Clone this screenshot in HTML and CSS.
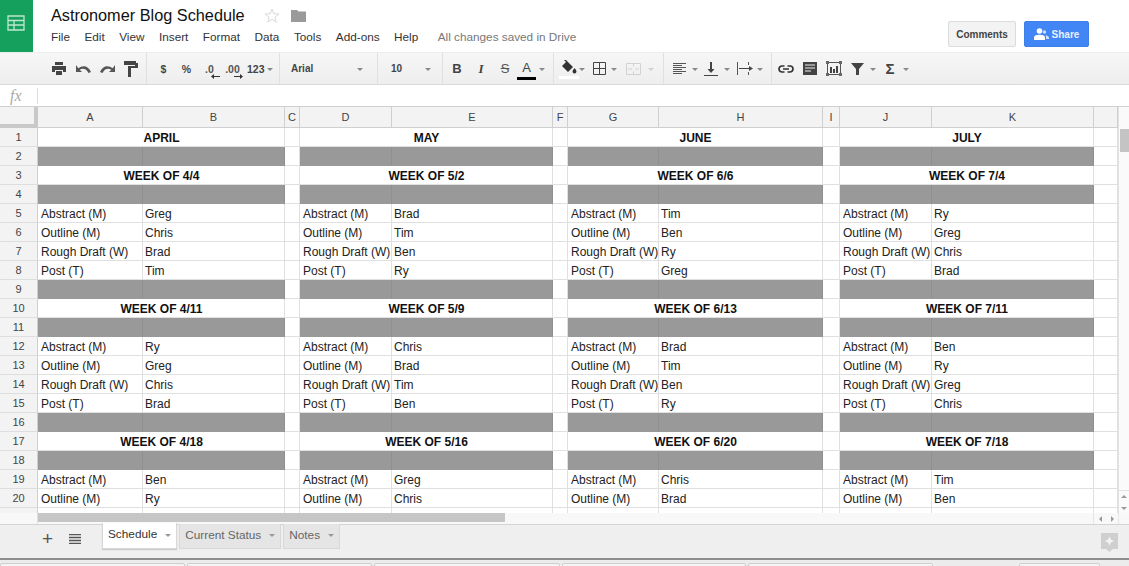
FILE: index.html
```html
<!DOCTYPE html>
<html lang="en">
<head>
    <meta charset="UTF-8">
    <title>Astronomer Blog Schedule</title>
    <link rel="stylesheet" href="styles.css">
</head>
<body>
    <header class="topbar">
        <div class="logo">
            <svg width="18" height="16" viewBox="0 0 18 16"><path d="M1 1h16v14H1zM1 5.500h16M1 10h16M7 5.500V15" fill="none" stroke="#bfe8cf" stroke-width="1.300"/></svg>
        </div>
        <div class="titles">
            <div class="title-row">
                <span class="doc-title">Astronomer Blog Schedule</span>
                <svg class="star" width="16" height="15" viewBox="0 0 16 15"><path d="M8 1l1.800 4.700 5 .3-3.900 3.200 1.300 4.800L8 11.300 3.800 14l1.300-4.800L1.200 6l5-.3z" fill="none" stroke="#d8d8d8"/></svg>
                <svg class="folder" width="15" height="13" viewBox="0 0 15 13"><path d="M0 1h6l1.500 1.500H15V13H0z" fill="#9a9a9a"/></svg>
            </div>
            <nav class="menu">
                <span>File</span><span>Edit</span><span>View</span><span>Insert</span><span>Format</span><span>Data</span><span>Tools</span><span>Add-ons</span><span>Help</span>
                <span class="saved">All changes saved in Drive</span>
            </nav>
        </div>
        <div class="actions">
            <button class="btn-comments">Comments</button>
            <button class="btn-share">
                <svg width="15" height="12" viewBox="0 0 15 12"><circle cx="5.500" cy="3" r="2.800" fill="#fff"/><path d="M0 12V9.500C0 7.500 3 6.800 5.500 6.800S11 7.500 11 9.500V12z" fill="#fff"/><circle cx="10.500" cy="4" r="1.700" fill="#cfe0fb"/><path d="M11.500 7.200c1.500.3 3.500 1 3.500 2.300V11h-3V9c0-.7-.2-1.300-.5-1.800z" fill="#cfe0fb"/></svg>
                Share
            </button>
        </div>
    </header>

    <div class="toolbar">
        <div class="tb-group first">
            <span class="tb-btn"><svg width="14" height="13" viewBox="0 0 14 13"><path d="M3 0h8v3H3zM0 4h14v6h-3V8H3v2H0zM4 9h6v4H4z" fill="#444"/></svg></span>
            <span class="tb-btn"><svg width="15" height="8" viewBox="0 0 15 8"><path d="M0 0v7h6L3.700 4.800C6.500 2.700 10.500 3.300 12.500 8L15 7C12.500 1 7 -.5 2.300 3.300z" fill="#555"/></svg></span>
            <span class="tb-btn"><svg width="15" height="8" viewBox="0 0 15 8"><path d="M15 0v7H9l2.300-2.200C8.500 2.700 4.500 3.300 2.500 8L0 7C2.500 1 8 -.5 12.700 3.300z" fill="#555"/></svg></span>
            <span class="tb-btn"><svg width="14" height="16" viewBox="0 0 14 16"><path d="M0 0h12v2h2v5H7v9H4V5h7V4H0z" fill="#444"/></svg></span>
        </div>
        <div class="tb-group money">
            <span class="tb-btn tb-text">$</span>
            <span class="tb-btn tb-text">%</span>
            <span class="tb-btn tb-dec">.0<svg width="9" height="5" viewBox="0 0 9 5"><path d="M9 2v1H3v2L0 2.500 3 0v2z" fill="#333"/></svg></span>
            <span class="tb-btn tb-dec">.00<svg width="9" height="5" viewBox="0 0 9 5"><path d="M0 2v1h6v2l3-2.500L6 0v2z" fill="#333"/></svg></span>
            <span class="tb-text num-format">123</span><i class="caret"></i>
        </div>
        <div class="tb-group font-name"><span class="tb-label">Arial</span><i class="caret"></i></div>
        <div class="tb-group font-size"><span class="tb-label">10</span><i class="caret"></i></div>
        <div class="tb-group text-style">
            <span class="tb-btn tb-b">B</span>
            <span class="tb-btn tb-i">I</span>
            <span class="tb-btn tb-s">S</span>
            <span class="tb-btn tb-a">A</span><i class="caret"></i>
        </div>
        <div class="tb-group cell-style">
            <span class="tb-btn fill"><svg width="17" height="15" viewBox="0 0 17 15"><path d="M3 0l1-1 8 8-5 5-6-6 4-4zM13.500 8s2 2.300 2 3.500a2 2 0 0 1-4 0c0-1.200 2-3.500 2-3.500z" fill="#333"/></svg></span><i class="caret"></i>
            <span class="tb-btn"><svg width="13" height="13" viewBox="0 0 13 13"><path d="M.5.500h12v12H.5zM6.500.500v12M.5 6.500h12" fill="none" stroke="#444"/></svg></span><i class="caret"></i>
            <span class="tb-btn merge"><svg width="15" height="12" viewBox="0 0 15 12"><path d="M.5.500h14v11H.5zM7.500.500v3M7.500 8.500v3M2 6h4M9 6h4" fill="none" stroke="#d2d2d2"/></svg></span><i class="caret faint"></i>
        </div>
        <div class="tb-group align">
            <span class="tb-btn"><svg width="13" height="11" viewBox="0 0 13 11"><path d="M0 .5h13M0 2.500h9M0 4.500h13M0 6.500h9M0 8.500h13M0 10.500h9" stroke="#555"/></svg></span><i class="caret"></i>
            <span class="tb-btn"><svg width="14" height="14" viewBox="0 0 14 14"><path d="M6 0h2v7h2.500L7 11 3.500 7H6zM0 13h14v1H0z" fill="#444"/></svg></span><i class="caret"></i>
            <span class="tb-btn wrap"><svg width="17" height="13" viewBox="0 0 17 13"><path d="M.5 0v13M11.500 0v3M11.500 10v3" fill="none" stroke="#555"/><path d="M2 6h10V4l4 2.500L12 9V7H2z" fill="#444"/></svg></span><i class="caret"></i>
        </div>
        <div class="tb-group insert">
            <span class="tb-btn"><svg width="16" height="8" viewBox="0 0 16 8"><path d="M6.500 1H4a3 3 0 0 0 0 6h2.500M9.500 1H12a3 3 0 0 1 0 6H9.500M5 4h6" fill="none" stroke="#333" stroke-width="1.700"/></svg></span>
            <span class="tb-btn"><svg width="14" height="13" viewBox="0 0 14 13"><path d="M0 0h14v13H0z" fill="#444"/><path d="M2 3h10M2 6h10M2 9h6" stroke="#eee"/></svg></span>
            <span class="tb-btn"><svg width="16" height="15" viewBox="0 0 16 15"><path d="M1.500 1.500h13v12h-13z" fill="none" stroke="#555"/><path d="M4 6h2v6H4zM7 8h2v4H7zM10 5h2v7h-2z" fill="#444"/><path d="M0 0h3v3H0zM13 0h3v3h-3zM0 12h3v3H0zM13 12h3v3h-3z" fill="#666"/></svg></span>
            <span class="tb-btn tb-narrow"><svg width="13" height="12" viewBox="0 0 13 12"><path d="M0 0h13L8 6v6H5V6z" fill="#444"/></svg></span><i class="caret"></i>
            <span class="tb-btn tb-narrow tb-sum">Σ</span><i class="caret"></i>
        </div>
    </div>

    <div class="formula">
        <span class="fx">fx</span>
        <span class="formula-input"></span>
    </div>

    <div class="sheet-wrap">
        <div class="sheet">
            <table class="grid">
                <colgroup>
                    <col class="c-row"><col class="c-a"><col class="c-b"><col class="c-gap"><col class="c-d"><col class="c-e"><col class="c-gap"><col class="c-g"><col class="c-h"><col class="c-i"><col class="c-d"><col class="c-k"><col class="c-x">
                </colgroup>
                <thead>
                    <tr><th class="corner"></th><th>A</th><th>B</th><th>C</th><th>D</th><th>E</th><th>F</th><th>G</th><th>H</th><th>I</th><th>J</th><th>K</th><th></th></tr>
                </thead>
                <tbody>
                    <tr><th>1</th><td class="head" colspan="2">APRIL</td><td></td><td class="head" colspan="2">MAY</td><td></td><td class="head" colspan="2">JUNE</td><td></td><td class="head" colspan="2">JULY</td><td></td></tr>
                    <tr><th>2</th><td class="bar"></td><td class="bar"></td><td></td><td class="bar"></td><td class="bar"></td><td></td><td class="bar"></td><td class="bar"></td><td></td><td class="bar"></td><td class="bar"></td><td></td></tr>
                    <tr><th>3</th><td class="head" colspan="2">WEEK OF 4/4</td><td></td><td class="head" colspan="2">WEEK OF 5/2</td><td></td><td class="head" colspan="2">WEEK OF 6/6</td><td></td><td class="head" colspan="2">WEEK OF 7/4</td><td></td></tr>
                    <tr><th>4</th><td class="bar"></td><td class="bar"></td><td></td><td class="bar"></td><td class="bar"></td><td></td><td class="bar"></td><td class="bar"></td><td></td><td class="bar"></td><td class="bar"></td><td></td></tr>
                    <tr><th>5</th><td>Abstract (M)</td><td>Greg</td><td></td><td>Abstract (M)</td><td>Brad</td><td></td><td>Abstract (M)</td><td>Tim</td><td></td><td>Abstract (M)</td><td>Ry</td><td></td></tr>
                    <tr><th>6</th><td>Outline (M)</td><td>Chris</td><td></td><td>Outline (M)</td><td>Tim</td><td></td><td>Outline (M)</td><td>Ben</td><td></td><td>Outline (M)</td><td>Greg</td><td></td></tr>
                    <tr><th>7</th><td>Rough Draft (W)</td><td>Brad</td><td></td><td>Rough Draft (W)</td><td>Ben</td><td></td><td>Rough Draft (W)</td><td>Ry</td><td></td><td>Rough Draft (W)</td><td>Chris</td><td></td></tr>
                    <tr><th>8</th><td>Post (T)</td><td>Tim</td><td></td><td>Post (T)</td><td>Ry</td><td></td><td>Post (T)</td><td>Greg</td><td></td><td>Post (T)</td><td>Brad</td><td></td></tr>
                    <tr><th>9</th><td class="bar"></td><td class="bar"></td><td></td><td class="bar"></td><td class="bar"></td><td></td><td class="bar"></td><td class="bar"></td><td></td><td class="bar"></td><td class="bar"></td><td></td></tr>
                    <tr><th>10</th><td class="head" colspan="2">WEEK OF 4/11</td><td></td><td class="head" colspan="2">WEEK OF 5/9</td><td></td><td class="head" colspan="2">WEEK OF 6/13</td><td></td><td class="head" colspan="2">WEEK OF 7/11</td><td></td></tr>
                    <tr><th>11</th><td class="bar"></td><td class="bar"></td><td></td><td class="bar"></td><td class="bar"></td><td></td><td class="bar"></td><td class="bar"></td><td></td><td class="bar"></td><td class="bar"></td><td></td></tr>
                    <tr><th>12</th><td>Abstract (M)</td><td>Ry</td><td></td><td>Abstract (M)</td><td>Chris</td><td></td><td>Abstract (M)</td><td>Brad</td><td></td><td>Abstract (M)</td><td>Ben</td><td></td></tr>
                    <tr><th>13</th><td>Outline (M)</td><td>Greg</td><td></td><td>Outline (M)</td><td>Brad</td><td></td><td>Outline (M)</td><td>Tim</td><td></td><td>Outline (M)</td><td>Ry</td><td></td></tr>
                    <tr><th>14</th><td>Rough Draft (W)</td><td>Chris</td><td></td><td>Rough Draft (W)</td><td>Tim</td><td></td><td>Rough Draft (W)</td><td>Ben</td><td></td><td>Rough Draft (W)</td><td>Greg</td><td></td></tr>
                    <tr><th>15</th><td>Post (T)</td><td>Brad</td><td></td><td>Post (T)</td><td>Ben</td><td></td><td>Post (T)</td><td>Ry</td><td></td><td>Post (T)</td><td>Chris</td><td></td></tr>
                    <tr><th>16</th><td class="bar"></td><td class="bar"></td><td></td><td class="bar"></td><td class="bar"></td><td></td><td class="bar"></td><td class="bar"></td><td></td><td class="bar"></td><td class="bar"></td><td></td></tr>
                    <tr><th>17</th><td class="head" colspan="2">WEEK OF 4/18</td><td></td><td class="head" colspan="2">WEEK OF 5/16</td><td></td><td class="head" colspan="2">WEEK OF 6/20</td><td></td><td class="head" colspan="2">WEEK OF 7/18</td><td></td></tr>
                    <tr><th>18</th><td class="bar"></td><td class="bar"></td><td></td><td class="bar"></td><td class="bar"></td><td></td><td class="bar"></td><td class="bar"></td><td></td><td class="bar"></td><td class="bar"></td><td></td></tr>
                    <tr><th>19</th><td>Abstract (M)</td><td>Ben</td><td></td><td>Abstract (M)</td><td>Greg</td><td></td><td>Abstract (M)</td><td>Chris</td><td></td><td>Abstract (M)</td><td>Tim</td><td></td></tr>
                    <tr><th>20</th><td>Outline (M)</td><td>Ry</td><td></td><td>Outline (M)</td><td>Chris</td><td></td><td>Outline (M)</td><td>Brad</td><td></td><td>Outline (M)</td><td>Ben</td><td></td></tr>
                    <tr><th></th><td></td><td></td><td></td><td></td><td></td><td></td><td></td><td></td><td></td><td></td><td></td><td></td></tr>
                </tbody>
            </table>
        </div>
        <div class="vscroll">
            <div class="vthumb"></div>
            <div class="varrows"><i class="arr-up"></i><i class="arr-down"></i></div>
        </div>
    </div>

    <div class="hscroll">
        <div class="hcorner"></div>
        <div class="htrack"><div class="hthumb"></div></div>
        <div class="harrows"><i class="arr-left"></i><i class="arr-right"></i></div>
    </div>

    <div class="tabbar">
        <span class="add-sheet">+</span>
        <svg class="all-sheets" width="12" height="10" viewBox="0 0 12 10"><path d="M0 .5h12M0 3.500h12M0 6.500h12M0 9.500h12" stroke="#555" stroke-width="1.300"/></svg>
        <div class="tabs">
            <div class="tab active">Schedule<i class="caret"></i></div>
            <div class="tab">Current Status<i class="caret"></i></div>
            <div class="tab">Notes<i class="caret"></i></div>
        </div>
        <svg class="explore" width="17" height="19" viewBox="0 0 17 19"><path d="M0 0h17v16h-5l-3.500 3L5 16H0z" fill="#cfcfcf"/><path d="M8.500 3.500l1.500 3 3 1.500-3 1.500-1.500 3-1.500-3-3-1.500 3-1.500z" fill="#f3f3f3"/></svg>
    </div>

    <div class="downloads">
        <span class="dl w1"></span><span class="dl w1"></span><span class="dl w2"></span><span class="dl w3"></span><span class="dl w1"></span>
        <span class="dl w4"></span>
    </div>
</body>
</html>
```

FILE: styles.css
```css
html, body {
    margin: 0;
    height: 100%;
}
body {
    width: 1129px;
    height: 566px;
    overflow: hidden;
    display: flex;
    flex-direction: column;
    font-family: "Liberation Sans", Arial, sans-serif;
    background: #fff;
    color: #222;
}

/* top bar */
.topbar {
    height: 52px;
    flex: none;
    display: flex;
}
.logo {
    width: 33px;
    background: #16a05d;
    display: flex;
    align-items: center;
    justify-content: center;
    padding: 0 2px 6px 0;
    box-sizing: border-box;
}
.titles {
    margin-left: 18px;
    flex: 1;
}
.title-row {
    display: flex;
    align-items: center;
    height: 29px;
    padding-top: 1px;
    box-sizing: border-box;
}
.doc-title {
    font-size: 16.300px;
    color: #111;
    line-height: 29px;
}
.star {
    margin-left: 19px;
}
.folder {
    margin-left: 11px;
}
.menu {
    display: flex;
    font-size: 11.750px;
    color: #333;
    gap: 14.500px;
    line-height: 15px;
}
.menu .saved {
    margin-left: 5px;
    color: #777;
}
.actions {
    display: flex;
    gap: 8px;
    padding: 21px 40px 0 0;
}
.actions button {
    height: 26px;
    border-radius: 2px;
    font-family: inherit;
    font-size: 10px;
    font-weight: bold;
    padding: 0;
}
.btn-comments {
    width: 68px;
    background: #f3f3f3;
    border: 1px solid #dcdcdc;
    color: #444;
}
.btn-share {
    width: 65px;
    background: #4285f4;
    border: 1px solid #3f7fe8;
    color: #e8f0fe;
    display: flex;
    align-items: center;
    justify-content: center;
    gap: 3px;
}

/* toolbar */
.toolbar {
    height: 33px;
    flex: none;
    display: flex;
    background: linear-gradient(#f6f6f6, #eeeeee);
    border-top: 1px solid #ececec;
    border-bottom: 1px solid #d9d9d9;
    box-sizing: border-box;
    color: #333;
    font-size: 11px;
}
.tb-group {
    display: flex;
    align-items: center;
    border-right: 1px solid #e0e0e0;
    box-sizing: border-box;
    flex: none;
}
.tb-group.first { width: 147px; padding-left: 47px; }
.money { width: 133px; padding-left: 5px; }
.font-name { width: 98px; padding-left: 11px; }
.font-size { width: 65px; padding-left: 13px; }
.text-style { width: 111px; padding-left: 2px; }
.cell-style { width: 110px; padding-left: 3px; }
.align { width: 108px; padding-left: 3px; }
.insert { width: 160px; padding-left: 2px; border-right: 0; }
.tb-btn {
    width: 24px;
    height: 24px;
    display: flex;
    align-items: center;
    justify-content: center;
    flex: none;
}
.money .tb-btn { width: 23px; }
.tb-narrow { width: 22px; }
.tb-text {
    font-weight: bold;
    color: #444;
    font-size: 10.500px;
}
.tb-dec {
    position: relative;
    font-weight: bold;
    font-size: 10.500px;
    color: #555;
}
.tb-dec svg {
    position: absolute;
    right: 1px;
    bottom: 2px;
}
.num-format {
    margin-left: 3px;
}
.tb-label {
    font-weight: bold;
    font-size: 10px;
    color: #444;
}
.font-name .tb-label { width: 64px; }
.font-size .tb-label { width: 32px; }
.tb-b { font: bold 13px "Liberation Sans", sans-serif; color: #444; }
.tb-i { font: italic bold 13px "Liberation Serif", serif; color: #444; }
.tb-s { font-size: 13px; color: #555; text-decoration: line-through; }
.tb-a {
    font-size: 13px;
    color: #444;
    width: 19px;
    height: 19px;
    border-bottom: 3px solid #000;
    box-sizing: content-box;
    flex: none;
}
.tb-sum { font-size: 15px; font-weight: bold; color: #444; }
.wrap { width: 22px; margin-left: 3px; }
.fill {
    height: 18px;
    border-bottom: 3px solid #fff;
    width: 20px;
    margin-left: 2px;
}
.merge { margin-left: 2px; }
.caret {
    width: 0;
    height: 0;
    border: 3px solid transparent;
    border-top: 3px solid #888;
    border-bottom: 0;
    margin: 2px 3px 0 2px;
    flex: none;
}
.text-style .caret { margin-left: 3px; }
.cell-style .caret { margin: 2px 2px 0 0; }
.cell-style .caret.faint { margin-left: 3px; border-top-color: #d0d0d0; }
.align .caret { margin: 2px 1px 0 1px; }

/* formula bar */
.formula {
    height: 22px;
    flex: none;
    display: flex;
    align-items: center;
    border-bottom: 1px solid #d0d0d0;
    box-sizing: border-box;
}
.fx {
    width: 37px;
    padding-left: 10px;
    box-sizing: border-box;
    font: italic 16px "Liberation Serif", serif;
    color: #aaa;
}
.formula-input {
    height: 16px;
    border-left: 1px solid #ddd;
}

/* grid */
.sheet-wrap {
    height: 406px;
    flex: none;
    display: flex;
    overflow: hidden;
}
.sheet {
    width: 1119px;
    flex: none;
    overflow: hidden;
    border-right: 1px solid #e2e2e2;
    box-sizing: border-box;
}
.grid {
    table-layout: fixed;
    width: 1118px;
    border-collapse: separate;
    border-spacing: 0;
    font-size: 12px;
    color: #222;
}
.c-row { width: 38px; }
.c-a { width: 105px; }
.c-b { width: 142px; }
.c-gap { width: 15px; }
.c-d { width: 92px; }
.c-e { width: 161px; }
.c-g { width: 91px; }
.c-h { width: 164px; }
.c-i { width: 17px; }
.c-k { width: 162px; }
.c-x { width: 24px; }
.grid th {
    background: #f3f3f3;
    font-weight: normal;
    font-size: 11px;
    color: #444;
    padding: 0;
    text-align: center;
    border-right: 1px solid #cfcfcf;
    border-bottom: 1px solid #dedede;
}
.grid thead th {
    height: 21px;
    box-sizing: border-box;
    border-bottom: 1px solid #cfcfcf;
}
.grid .corner {
    border-right: 4px solid #c9c9c9;
    border-bottom: 4px solid #c9c9c9;
}
.grid td {
    height: 19px;
    box-sizing: border-box;
    padding: 2px 2px 0 3px;
    border-right: 1px solid #e0e0e0;
    border-bottom: 1px solid #e0e0e0;
    white-space: nowrap;
    overflow: hidden;
    line-height: 16px;
}
.grid td:nth-child(3n):not(.head) {
    padding-left: 2px;
}
.grid td.head {
    text-align: center;
    font-weight: bold;
    color: #111;
}
.grid td.bar {
    background: #999;
    border-right-color: #8f8f8f;
    border-bottom-color: #999;
}
.vscroll {
    flex: 1;
    background: #fafafa;
    position: relative;
}
.vthumb {
    height: 23px;
    margin: 22px 0 0 1px;
    background: #c4c4c4;
}
.varrows {
    position: absolute;
    left: 0;
    right: 0;
    top: 383px;
    height: 23px;
    border-top: 1px solid #e2e2e2;
    display: flex;
    flex-direction: column;
    align-items: center;
    justify-content: space-around;
}
.varrows i, .harrows i {
    width: 0;
    height: 0;
    border: 3px solid transparent;
}
.arr-up { border-bottom-color: #999 !important; border-top: 0 !important; }
.arr-down { border-top-color: #999 !important; border-bottom: 0 !important; }
.arr-left { border-right-color: #999 !important; border-left: 0 !important; }
.arr-right { border-left-color: #999 !important; border-right: 0 !important; }

.hscroll {
    height: 11px;
    flex: none;
    display: flex;
    background: #f8f8f8;
    border-bottom: 1px solid #d4d4d4;
    box-sizing: content-box;
}
.hcorner {
    width: 38px;
    border-right: 1px solid #e0e0e0;
    box-sizing: border-box;
}
.htrack {
    width: 1055px;
}
.hthumb {
    width: 467px;
    height: 9px;
    background: #c6c6c6;
}
.harrows {
    width: 26px;
    display: flex;
    align-items: center;
    justify-content: space-around;
    border-left: 1px solid #e6e6e6;
    border-right: 1px solid #e6e6e6;
    box-sizing: border-box;
}

/* sheet tabs */
.tabbar {
    height: 33px;
    flex: none;
    display: flex;
    align-items: flex-start;
    background: #efefef;
    position: relative;
}
.add-sheet {
    margin: 2px 0 0 42px;
    font-size: 19px;
    line-height: 24px;
    color: #555;
    width: 27px;
}
.all-sheets {
    margin-top: 9px;
}
.tabs {
    display: flex;
    margin: -2px 0 0 21px;
    gap: 2px;
}
.tab {
    height: 25px;
    margin-top: 1px;
    padding: 0 5px 2px 5px;
    font-size: 11.800px;
    line-height: 21px;
    color: #666;
    background: #e5e5e5;
    border: 1px solid #d8d8d8;
    border-top: 0;
    box-sizing: border-box;
    display: flex;
    align-items: center;
    gap: 8px;
}
.tab .caret {
    margin: 1px 0 0 0;
    border-top-color: #999;
}
.tab.active {
    margin-top: 0;
    height: 26px;
    background: #fff;
    color: #333;
    box-shadow: 0 1px 1px #ccc;
}
.explore {
    position: absolute;
    right: 11px;
    top: 8px;
}

/* download shelf */
.downloads {
    flex: 1;
    display: flex;
    gap: 2px;
    background: #ececec;
    border-top: 2px solid #8e8e8e;
    padding-top: 3px;
    box-sizing: border-box;
}
.dl {
    height: 8px;
    background: #f4f4f4;
    border: 1px solid #cfcfcf;
    border-radius: 2px;
    box-sizing: border-box;
}
.w1 { width: 185px; }
.w2 { width: 186px; }
.w3 { width: 184px; }
.w4 { width: 81px; margin-left: 84px; }
```
